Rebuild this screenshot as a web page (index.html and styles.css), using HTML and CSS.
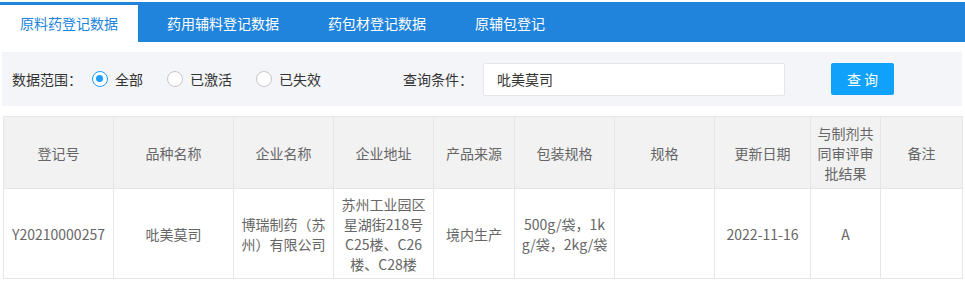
FILE: index.html
```html
<!DOCTYPE html>
<html lang="zh-CN">
<head>
    <meta charset="UTF-8">
    <title>原料药登记数据</title>
    <link rel="stylesheet" href="styles.css">
</head>
<body>
    <div class="page">
        <!-- Tabs -->
        <div class="tabs">
            <div class="tab active">原料药登记数据</div>
            <div class="tab">药用辅料登记数据</div>
            <div class="tab">药包材登记数据</div>
            <div class="tab">原辅包登记</div>
        </div>

        <!-- Search bar -->
        <div class="search">
            <span class="label">数据范围：</span>
            <div class="radios">
                <label class="radio checked"><i></i>全部</label>
                <label class="radio"><i></i>已激活</label>
                <label class="radio"><i></i>已失效</label>
            </div>
            <span class="label query-label">查询条件：</span>
            <input class="query-input" type="text" value="吡美莫司">
            <button class="btn">查 询</button>
        </div>

        <!-- Result table -->
        <table class="grid">
            <colgroup>
                <col style="width:110px">
                <col style="width:120px">
                <col style="width:100px">
                <col style="width:100px">
                <col style="width:81px">
                <col style="width:100px">
                <col style="width:100px">
                <col style="width:96px">
                <col style="width:70px">
                <col style="width:82px">
            </colgroup>
            <thead>
                <tr>
                    <th>登记号</th>
                    <th>品种名称</th>
                    <th>企业名称</th>
                    <th>企业地址</th>
                    <th>产品来源</th>
                    <th>包装规格</th>
                    <th>规格</th>
                    <th>更新日期</th>
                    <th>与制剂共同审评审批结果</th>
                    <th>备注</th>
                </tr>
            </thead>
            <tbody>
                <tr>
                    <td>Y20210000257</td>
                    <td>吡美莫司</td>
                    <td>博瑞制药（苏州）有限公司</td>
                    <td>苏州工业园区星湖街218号C25楼、C26楼、C28楼</td>
                    <td>境内生产</td>
                    <td>500g/袋，1kg/袋，2kg/袋</td>
                    <td></td>
                    <td>2022-11-16</td>
                    <td>A</td>
                    <td></td>
                </tr>
            </tbody>
        </table>
    </div>
</body>
</html>
```

FILE: styles.css
```css
body, html {
    margin: 0;
    padding: 0;
    background-color: #ffffff;
    font-family: "Noto Sans CJK SC", "Microsoft YaHei", sans-serif;
    font-size: 14px;
    color: #333;
}

.page {
    padding-top: 2px;
}

/* tabs */
.tabs {
    display: flex;
    align-items: flex-end;
    height: 40px;
    background-color: #2184dc;
}

.tab {
    height: 37px;
    line-height: 37px;
    padding: 0 20px;
    margin-right: 9px;
    color: #ffffff;
    cursor: pointer;
}

.tab.active {
    background-color: #ffffff;
    color: #2184dc;
}

/* search bar */
.search {
    display: flex;
    align-items: center;
    margin: 10px 3px 0 2px;
    height: 54px;
    padding-left: 10px;
    background-color: #f4f5f9;
}

.label {
    color: #333;
}

.radios {
    display: flex;
    align-items: center;
    margin-left: 10px;
}

.radio {
    display: flex;
    align-items: center;
    margin-right: 24px;
    cursor: pointer;
}

.radio i {
    box-sizing: border-box;
    width: 16px;
    height: 16px;
    border: 1px solid #c6c6c6;
    border-radius: 50%;
    background-color: #fff;
    margin-right: 7px;
    position: relative;
}

.radio.checked i {
    border: 1.5px solid #1e9fff;
}

.radio.checked i::after {
    content: "";
    position: absolute;
    left: 3px;
    top: 3px;
    width: 7px;
    height: 7px;
    border-radius: 50%;
    background-color: #1e9fff;
}

.query-label {
    margin-left: 58px;
}

.query-input {
    box-sizing: border-box;
    width: 302px;
    height: 33px;
    margin-left: 10px;
    padding: 0 13px;
    border: 1px solid #e6e6e6;
    border-radius: 2px;
    background-color: #fff;
    font-family: inherit;
    font-size: 14px;
    color: #333;
    outline: none;
}

.btn {
    width: 63px;
    height: 32px;
    margin-left: 46px;
    border: none;
    border-radius: 2px;
    background-color: #10a2fb;
    color: #fff;
    font-family: inherit;
    font-size: 14px;
    cursor: pointer;
}

/* table */
.grid {
    margin: 10px 0 0 3px;
    width: 959px;
    table-layout: fixed;
    border-collapse: collapse;
    color: #666;
}

.grid th,
.grid td {
    border: 1px solid #e6e6e6;
    padding: 0 6px;
    text-align: center;
    vertical-align: middle;
    line-height: 20px;
    font-weight: normal;
    word-break: break-all;
}

.grid th {
    height: 71px;
    background-color: #f2f2f2;
}

.grid td {
    height: 89px;
}
```
